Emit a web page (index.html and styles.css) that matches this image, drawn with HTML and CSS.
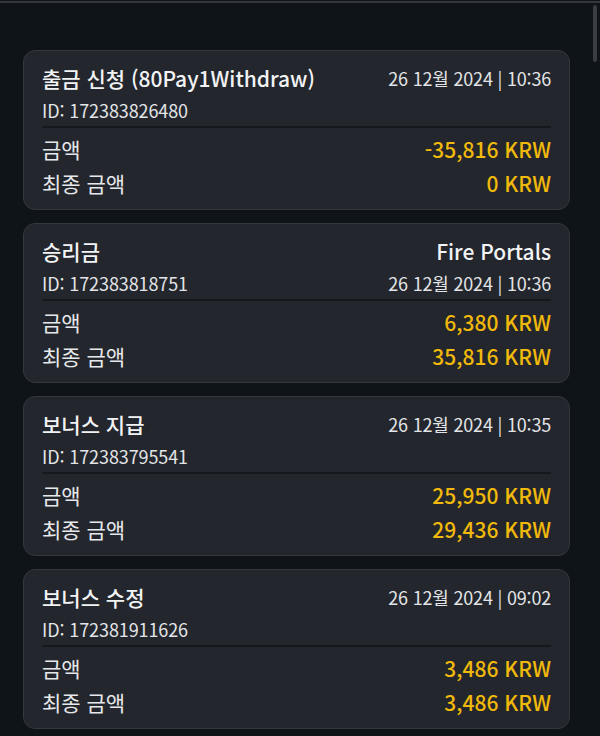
FILE: index.html
```html
<!DOCTYPE html>
<html lang="ko">

<head>
    <meta charset="UTF-8">
    <meta name="viewport" content="width=device-width, initial-scale=1.0">
    <title>거래 내역</title>
    <link rel="stylesheet" href="styles.css">
</head>

<body>
    <div class="topbar"></div>
    <div class="scrollbar"></div>

    <div class="list">
        <div class="card">
            <div class="head">
                <div class="line">
                    <span class="title">출금 신청 (80Pay1Withdraw)</span>
                    <span class="date">26 12월 2024 | 10:36</span>
                </div>
                <div class="line">
                    <span class="id">ID: 172383826480</span>
                </div>
            </div>
            <div class="row">
                <span class="label">금액</span>
                <span class="amount">-35,816 KRW</span>
            </div>
            <div class="row">
                <span class="label">최종 금액</span>
                <span class="amount">0 KRW</span>
            </div>
        </div>

        <div class="card">
            <div class="head">
                <div class="line">
                    <span class="title">승리금</span>
                    <span class="game">Fire Portals</span>
                </div>
                <div class="line">
                    <span class="id">ID: 172383818751</span>
                    <span class="date">26 12월 2024 | 10:36</span>
                </div>
            </div>
            <div class="row">
                <span class="label">금액</span>
                <span class="amount">6,380 KRW</span>
            </div>
            <div class="row">
                <span class="label">최종 금액</span>
                <span class="amount">35,816 KRW</span>
            </div>
        </div>

        <div class="card">
            <div class="head">
                <div class="line">
                    <span class="title">보너스 지급</span>
                    <span class="date">26 12월 2024 | 10:35</span>
                </div>
                <div class="line">
                    <span class="id">ID: 172383795541</span>
                </div>
            </div>
            <div class="row">
                <span class="label">금액</span>
                <span class="amount">25,950 KRW</span>
            </div>
            <div class="row">
                <span class="label">최종 금액</span>
                <span class="amount">29,436 KRW</span>
            </div>
        </div>

        <div class="card">
            <div class="head">
                <div class="line">
                    <span class="title">보너스 수정</span>
                    <span class="date">26 12월 2024 | 09:02</span>
                </div>
                <div class="line">
                    <span class="id">ID: 172381911626</span>
                </div>
            </div>
            <div class="row">
                <span class="label">금액</span>
                <span class="amount">3,486 KRW</span>
            </div>
            <div class="row">
                <span class="label">최종 금액</span>
                <span class="amount">3,486 KRW</span>
            </div>
        </div>
    </div>
</body>

</html>
```

FILE: styles.css
```css
body {
    font-family: "Noto Sans CJK KR", "Noto Sans", sans-serif;
    background-color: #0f1419;
    color: #eaecef;
    margin: 0;
    padding: 0;
    height: 736px;
    overflow: hidden;
}

.topbar {
    height: 1px;
    border-bottom: 2px solid #34373c;
}

.scrollbar {
    position: absolute;
    top: 5px;
    right: 3px;
    width: 4px;
    height: 57px;
    border-radius: 2px;
    background-color: #3a3d43;
}

.list {
    display: flex;
    flex-direction: column;
    gap: 13px;
    padding: 47px 30px 0 23px;
}

.card {
    box-sizing: border-box;
    height: 160px;
    background-color: #23262c;
    border: 1px solid #34373d;
    border-radius: 12px;
    padding: 11px 18px 0 18px;
}

.head {
    border-bottom: 2px solid #15181c;
    margin-bottom: 4px;
}

.line {
    display: flex;
    justify-content: space-between;
    align-items: center;
    height: 32px;
}

.title,
.game {
    font-size: 21px;
    font-weight: 500;
    color: #f2f3f5;
}

.date {
    font-size: 18px;
    color: #e2e4e7;
    letter-spacing: -0.2px;
}

.id {
    font-size: 18px;
    color: #e2e4e7;
    letter-spacing: -0.1px;
}

.row {
    display: flex;
    justify-content: space-between;
    align-items: center;
    height: 34px;
}

.label {
    font-size: 21px;
    color: #e6e8eb;
}

.amount {
    font-size: 21px;
    font-weight: 500;
    color: #f0b90b;
}
```
